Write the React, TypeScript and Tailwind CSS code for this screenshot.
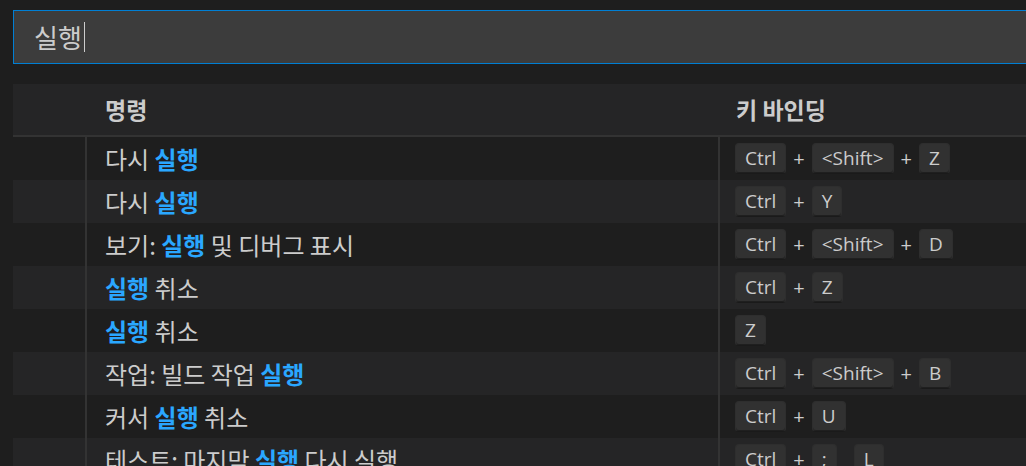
import React from "react";

type Row = {
    label: (string | { hl: string })[];
    keys: string[][]; // chords, each a list of keys
};

const rows: Row[] = [
    { label: ["다시 ", { hl: "실행" }], keys: [["Ctrl", "<Shift>", "Z"]] },
    { label: ["다시 ", { hl: "실행" }], keys: [["Ctrl", "Y"]] },
    { label: ["보기: ", { hl: "실행" }, " 및 디버그 표시"], keys: [["Ctrl", "<Shift>", "D"]] },
    { label: [{ hl: "실행" }, " 취소"], keys: [["Ctrl", "Z"]] },
    { label: [{ hl: "실행" }, " 취소"], keys: [["Z"]] },
    { label: ["작업: 빌드 작업 ", { hl: "실행" }], keys: [["Ctrl", "<Shift>", "B"]] },
    { label: ["커서 ", { hl: "실행" }, " 취소"], keys: [["Ctrl", "U"]] },
    { label: ["테스트: 마지막 ", { hl: "실행" }, " 다시 실행"], keys: [["Ctrl", ";"], ["L"]] },
];

const kr = "font-['Noto_Sans_CJK_KR','Noto_Sans',sans-serif]";

function Key({ k }: { k: string }) {
    return (
        <span className="inline-flex h-[31px] items-center rounded-[4px] border border-[#2e2e2e] border-b-[#1a1a1a] bg-[#313131] px-[9px] font-['Open_Sans',sans-serif] text-[19px] text-[#cccccc] shadow-[inset_0_-1px_0_rgba(0,0,0,0.35)]">
            {k}
        </span>
    );
}

export default function App() {
    return (
        <div className={`h-[466px] w-[1026px] overflow-hidden bg-[#1e1e1e] ${kr}`}>
            {/* search box */}
            <div className="ml-[13px] mt-[10px] flex h-[54px] w-[1030px] items-center border border-[#007fd4] bg-[#3c3c3c] pl-[20px]">
                <span className="text-[26px] leading-none text-[#cccccc]">실행</span>
                <span className="ml-[2px] h-[30px] w-px bg-[#cccccc]" />
            </div>

            {/* table */}
            <div className="ml-[13px] mt-[20px]">
                <div className="grid h-[53px] grid-cols-[72px_633px_1fr] border-b-2 border-[#333333] bg-[#252526] text-[23px] font-bold text-[#cccccc]">
                    <div />
                    <div className="flex items-center pl-[20px]">명령</div>
                    <div className="flex items-center pl-[18px]">키 바인딩</div>
                </div>
                {rows.map((r, i) => (
                    <div
                        key={i}
                        className={`grid h-[43px] grid-cols-[72px_633px_1fr] ${i % 2 ? "bg-[#252526]" : "bg-[#1e1e1e]"}`}
                    >
                        <div />
                        <div className="flex items-center whitespace-nowrap border-l-2 border-[#333333] pl-[18px] text-[24px] text-[#cccccc]">
                            {r.label.map((p, j) =>
                                typeof p === "string" ? (
                                    <span key={j} className="whitespace-pre">{p}</span>
                                ) : (
                                    <span key={j} className="font-bold text-[#2aa7ff]">{p.hl}</span>
                                )
                            )}
                        </div>
                        <div className="flex items-center border-l-2 border-[#333333] pl-[15px] text-[#cccccc]">
                            {r.keys.map((chord, c) => (
                                <span key={c} className={`flex items-center ${c > 0 ? "ml-[17px]" : ""}`}>
                                    {chord.map((k, n) => (
                                        <React.Fragment key={n}>
                                            {n > 0 && (
                                                <span className="mx-[7px] font-['Open_Sans',sans-serif] text-[20px]">+</span>
                                            )}
                                            <Key k={k} />
                                        </React.Fragment>
                                    ))}
                                </span>
                            ))}
                        </div>
                    </div>
                ))}
            </div>
        </div>
    );
}
